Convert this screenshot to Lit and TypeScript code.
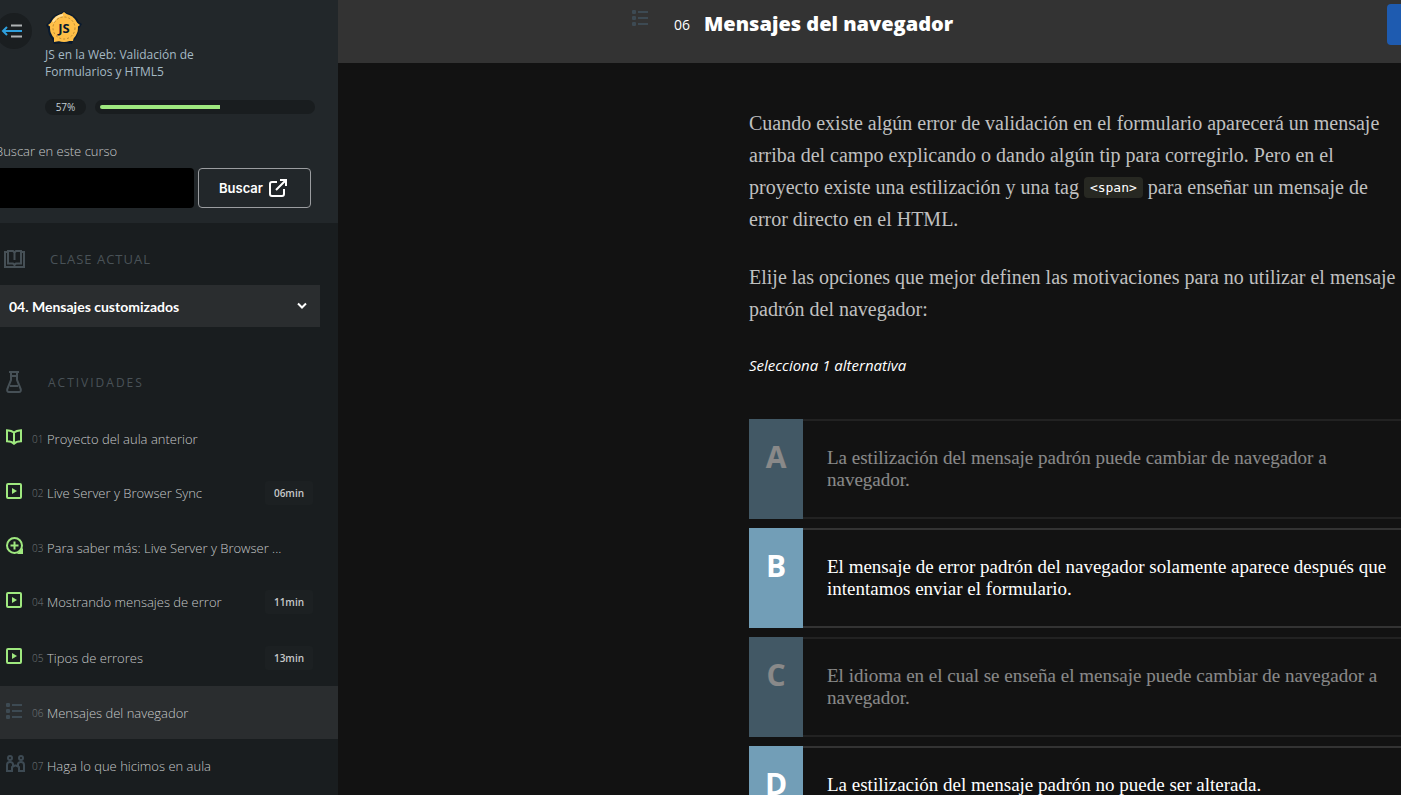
import { LitElement, html, css, svg, nothing } from "lit";
import { customElement, property } from "lit/decorators.js";

type Activity = { n: string; title: string; icon: string; time?: string; active?: boolean };

const ACTIVITIES: Activity[] = [
  { n: "01", title: "Proyecto del aula anterior", icon: "book" },
  { n: "02", title: "Live Server y Browser Sync", icon: "video", time: "06min" },
  { n: "03", title: "Para saber más: Live Server y Browser ...", icon: "plus" },
  { n: "04", title: "Mostrando mensajes de error", icon: "video", time: "11min" },
  { n: "05", title: "Tipos de errores", icon: "video", time: "13min" },
  { n: "06", title: "Mensajes del navegador", icon: "list", active: true },
  { n: "07", title: "Haga lo que hicimos en aula", icon: "people" },
];

const OPTIONS = [
  { letter: "A", text: "La estilización del mensaje padrón puede cambiar de navegador a navegador.", dim: true },
  { letter: "B", text: "El mensaje de error padrón del navegador solamente aparece después que intentamos enviar el formulario.", dim: false },
  { letter: "C", text: "El idioma en el cual se enseña el mensaje puede cambiar de navegador a navegador.", dim: true },
  { letter: "D", text: "La estilización del mensaje padrón no puede ser alterada.", dim: false },
];

const GREEN = "#9fe87f";
const SLATE = "#3d4a53";

const ICONS: Record<string, unknown> = {
  book: svg`<svg width="16" height="16" viewBox="0 0 16 16" fill="none" stroke=${GREEN} stroke-width="2"><path d="M1 1.200C4 1.400 6.600 2.200 8 3.400C9.400 2.200 12 1.400 15 1.200V12.300C12 12.400 9.500 13.200 8 14.700C6.500 13.200 4 12.400 1 12.300ZM8 3.400V14"/></svg>`,
  video: svg`<svg width="16" height="16" viewBox="0 0 16 16"><rect x="1" y="1" width="14" height="14" rx="1" fill="none" stroke=${GREEN} stroke-width="2"/><path d="M6 5L11 8L6 11Z" fill=${GREEN}/></svg>`,
  plus: svg`<svg width="17" height="17" viewBox="0 0 17 17" fill="none" stroke=${GREEN} stroke-width="2"><circle cx="8.500" cy="8.500" r="7.500"/><path d="M8.500 4.500V12.500M4.500 8.500H12.500"/><path d="M11 17H17V11L14 14Z" fill=${GREEN} stroke="none"/></svg>`,
  list: svg`<svg width="16" height="16" viewBox="0 0 16 16" fill=${SLATE}><rect width="4" height="4" rx="1"/><rect y="6" width="4" height="4" rx="1"/><rect y="12" width="4" height="4" rx="1"/><rect x="6" y="1" width="10" height="2"/><rect x="6" y="7" width="10" height="2"/><rect x="6" y="13" width="10" height="2"/></svg>`,
  people: svg`<svg width="19" height="18" viewBox="0 0 19 18" fill="none" stroke=${SLATE} stroke-width="2"><circle cx="4" cy="3" r="2"/><circle cx="15" cy="3" r="2"/><path d="M7 11V9Q6.500 7 4 7Q1 7 1 10V16H6V12L9 10.500L10 10.500L13 12V16H18V10Q18 7 15 7Q12.500 7 12 9V11"/></svg>`,
  openBook: svg`<svg width="21" height="18" viewBox="0 0 21 18" fill="none" stroke="#465056" stroke-width="2"><path d="M3 2H1V17H20V2H18"/><path d="M4 1H9L10.500 2.500L12 1H17V13.500H12L10.500 15L9 13.500H4ZM10.500 2.500V10" stroke-width="2"/></svg>`,
  flask: svg`<svg width="16" height="22" viewBox="0 0 16 22" fill="none" stroke="#465056" stroke-width="2"><path d="M3 1H13M5 1V9L1.300 18Q0.700 21 3 21H13Q15.300 21 14.700 18L11 9V1M4 15H12M5 5H11"/></svg>`,
};

@customElement("activity-row")
class ActivityRow extends LitElement {
  @property({ attribute: false }) item!: Activity;

  static styles = css`
    :host { display: block; }
    .row {
      display: grid;
      grid-template-columns: 20px 21px 1fr auto;
      align-items: center;
      height: 53px;
      box-sizing: border-box;
      padding: 0 25px 0 6px;
      color: #c6c8c9;
      text-decoration: none;
      font-size: 13px;
      font-weight: 300;
      line-height: 18px;
    }
    .timed { height: 56px; }
    .active { background: #2a2d2f; }
    .glyph { display: flex; height: 20px; padding-bottom: 4px; align-items: center; }
    .num { font-size: 10px; color: #74797c; padding-left: 6px; }
    .title { white-space: nowrap; }
    .time {
      background: #1c2022;
      border-radius: 3px;
      width: 48px;
      text-align: center;
      font-size: 10px;
      font-weight: 600;
      line-height: 24px;
    }
  `;

  render() {
    const a = this.item;
    return html`<a href="#" class="row ${a.time ? "timed" : ""} ${a.active ? "active" : ""}">
      <span class="glyph">${ICONS[a.icon]}</span>
      <span class="num">${a.n}</span>
      <span class="title">${a.title}</span>
      ${a.time ? html`<span class="time">${a.time}</span>` : nothing}
    </a>`;
  }
}

@customElement("app-root")
class AppRoot extends LitElement {
  static styles = css`
    :host {
      display: flex;
      height: 100vh;
      overflow: hidden;
      background: #121212;
      font-family: "Open Sans", "Noto Sans", sans-serif;
      font-weight: 400;
    }
    button, input, select { font: inherit; margin: 0; border: 0; }
    aside { flex: 0 0 338px; background: #191d1f; overflow: hidden; }
    .top { background: #22272a; padding: 10px 0 15px; }
    .course { display: flex; gap: 13px; align-items: flex-start; }
    .collapse {
      width: 36px; height: 36px; padding: 0 4px 0 0; margin: 3px 0 0 -4px;
      border-radius: 50%; background: #1a1e20;
      display: flex; align-items: center; justify-content: center;
    }
    .logo { display: block; }
    .name {
      margin: 0; width: 160px;
      font-size: 12px; line-height: 17px; font-weight: 400; color: #a5b9c4;
    }
    .progress { display: flex; align-items: center; gap: 9px; margin: 19px 23px 0 45px; }
    .pct {
      width: 41px; height: 16px; border-radius: 8px; background: #191d1f;
      font-size: 10px; line-height: 16px; text-align: center; color: #c3ced4;
    }
    .bar { flex: 1; height: 14px; box-sizing: border-box; padding: 5px; border-radius: 7px; background: #191d1f; }
    .fill { height: 4px; background: #9fe87f; border-radius: 2px 0 0 2px; }
    .search-label {
      display: block; margin: 27px 0 7px -5px;
      font-size: 13px; line-height: 19px; font-weight: 300; color: #c6c8c9;
    }
    .search { display: flex; gap: 4px; padding-right: 27px; }
    .search input {
      flex: 1; min-width: 0; height: 40px; box-sizing: border-box;
      background: #000; color: #fff; border-radius: 0 4px 4px 0; padding: 0 8px;
    }
    .search button {
      width: 113px; height: 40px; box-sizing: border-box;
      border: 1px solid #9b9da0; border-radius: 4px; background: none; color: #fff;
      font-family: Inter, sans-serif; font-weight: 600; font-size: 13px;
      display: flex; align-items: center; justify-content: center; gap: 5px;
      padding: 0 2px 0 0;
    }
    .heading {
      display: flex; align-items: center; height: 24px; margin: 0;
      font-size: 12px; font-weight: 600; color: #495257;
    }
    .heading span { width: 44px; display: flex; }
    .current { padding: 24px 0 0 4px; font-size: 13px; font-weight: 400; letter-spacing: 1px; }
    .current span { width: 46px; }
    .acts { padding: 43px 0 18px 6px; font-weight: 500; letter-spacing: 2px; }
    .acts span { width: 42px; }
    .picker { display: grid; margin: 14px 18px 0 0; align-items: center; background: #2a2d2f; }
    .picker select {
      grid-area: 1 / 1; appearance: none; background: none; color: #fff;
      height: 42px; padding: 0 40px 0 9px; width: 100%;
      font-family: Lato, sans-serif; font-weight: 700; font-size: 14px;
    }
    .picker svg { grid-area: 1 / 1; justify-self: end; margin-right: 13px; pointer-events: none; }

    main { flex: 1; min-width: 0; overflow: hidden; }
    header {
      height: 63px; box-sizing: border-box; background: #333; color: #fff;
      display: flex; align-items: flex-start; padding: 4px 0 0 294px;
    }
    .h-icon { display: flex; padding-top: 6px; width: 42px; }
    .h-num { font-size: 14px; line-height: 42px; width: 30px; }
    h1 { margin: 0; font-size: 20px; line-height: 40px; font-weight: 800; white-space: nowrap; }
    .next { margin-left: auto; width: 14px; height: 41px; padding: 0; background: #1e5bb0; border-radius: 4px 0 0 4px; }
    .content { padding: 44px 0 0 411px; }
    .content p {
      margin: 0 0 26px; color: #c0c0c0;
      font-family: "Source Serif Pro", "Liberation Serif", serif;
      font-size: 20px; line-height: 32px;
    }
    code {
      background: #272822; color: #fff; border-radius: 4px; padding: 3px 6px;
      font-family: "DejaVu Sans Mono", monospace; font-size: 13px; line-height: 16px;
      vertical-align: 2px;
    }
    .content .hint {
      margin: 0 0 40px; font-family: "Open Sans", sans-serif; font-style: italic;
      font-size: 15px; line-height: 28px; color: #fff;
    }
    .options { display: grid; gap: 9px; }
    .option {
      display: flex; min-height: 100px; padding: 0; background: none; color: #fff;
      text-align: left; align-items: stretch;
    }
    .dim { opacity: 0.5; }
    .letter {
      flex: 0 0 54px; background: #729eb7; padding-top: 18px;
      font-size: 30px; line-height: 40px; font-weight: 700; text-align: center;
    }
    .text {
      flex: 1; border: solid #333; border-width: 2px 0; padding: 26px 0 0 24px;
      font-family: "Source Serif Pro", "Liberation Serif", serif;
      font-size: 19px; line-height: 22px;
    }
  `;

  render() {
    return html`
      <aside>
        <div class="top">
          <div class="course">
            <button class="collapse" aria-label="Cerrar menú">
              <svg width="22" height="16" viewBox="0 0 22 16" fill="none"><path d="M10 2.500H21M10 13.500H21" stroke="#aeb2b4" stroke-width="2"/><path d="M21 8H2M6 4L2 8L6 12" stroke="#2f9fdc" stroke-width="2"/></svg>
            </button>
            <div>
              <svg class="logo" width="38" height="36" viewBox="0 0 38 36">
                <path d="M19 1L22 3C28 4 32 8 34 12L37 14L34 19C33 25 31 29 28 31L27 34L19 33L9 34L7 29C4 26 3 22 3 19L1 15L4 12C7 6 11 4 16 3Z" fill="#0a1a2e"/>
                <circle cx="19" cy="18" r="14" fill="#ffbf47"/>
                <path d="M19 2L24 6H14ZM3 15L7 12V18ZM35 15L31 12V18ZM9 32L9 26L15 31ZM28 31L29 26L22 31Z" fill="#ffbf47"/>
                <circle cx="19" cy="18" r="11" fill="none" stroke="#b98a35" stroke-dasharray="2 2"/>
                <path d="M8 12Q11 6 18 5" stroke="#ffdf9a" fill="none" stroke-width="2"/>
                <text x="19" y="23" text-anchor="middle" font-family="Open Sans" font-weight="700" font-size="13" fill="#0a1a2e">JS</text>
              </svg>
              <h2 class="name">JS en la Web: Validación de Formularios y HTML5</h2>
            </div>
          </div>
          <div class="progress">
            <div class="pct">57%</div>
            <div class="bar"><div class="fill" style="width:57%"></div></div>
          </div>
          <label class="search-label" for="q">Buscar en este curso</label>
          <div class="search">
            <input id="q" type="text" />
            <button>Buscar
              <svg width="20" height="20" viewBox="0 0 20 20" fill="none" stroke="#fff" stroke-width="2"><path d="M9 4H4Q2 4 2 6V16Q2 18 4 18H14Q16 18 16 16V11M12 2H18V8M18 2L8 12"/></svg>
            </button>
          </div>
        </div>
        <h3 class="heading current"><span>${ICONS.openBook}</span><label for="cls">CLASE ACTUAL</label></h3>
        <div class="picker">
          <select id="cls"><option>04. Mensajes customizados</option></select>
          <svg width="10" height="8" viewBox="0 0 10 8" fill="none" stroke="#fff" stroke-width="2"><path d="M1 1.500L5 5.500L9 1.500"/></svg>
        </div>
        <h3 class="heading acts"><span>${ICONS.flask}</span>ACTIVIDADES</h3>
        <nav>${ACTIVITIES.map((a) => html`<activity-row .item=${a}></activity-row>`)}</nav>
      </aside>
      <main>
        <header>
          <span class="h-icon">${ICONS.list}</span>
          <span class="h-num">06</span>
          <h1>Mensajes del navegador</h1>
          <button class="next" aria-label="Siguiente"></button>
        </header>
        <div class="content">
          <p>Cuando existe algún error de validación en el formulario aparecerá un mensaje arriba del campo explicando o dando algún tip para corregirlo. Pero en el proyecto existe una estilización y una tag <code>&lt;span&gt;</code> para enseñar un mensaje de error directo en el HTML.</p>
          <p>Elije las opciones que mejor definen las motivaciones para no utilizar el mensaje padrón del navegador:</p>
          <p class="hint">Selecciona 1 alternativa</p>
          <div class="options">
            ${OPTIONS.map((o) => html`<button class="option ${o.dim ? "dim" : ""}">
              <span class="letter">${o.letter}</span><span class="text">${o.text}</span>
            </button>`)}
          </div>
        </div>
      </main>
    `;
  }
}
